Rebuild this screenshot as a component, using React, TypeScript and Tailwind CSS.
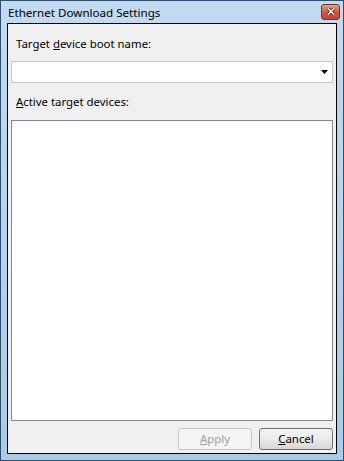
import React from 'react';

const font = { fontFamily: '"Noto Sans", "Open Sans", sans-serif' };

export default function App() {
  return (
    <div
      className="w-[344px] h-[461px] border border-[#2f4f6e] bg-gradient-to-b from-[#c2dbf0] to-[#a8cbe7] flex flex-col px-[6px] pb-[6px] text-[11.4px] text-black"
      style={font}
    >
      {/* title bar */}
      <div className="h-[22px] flex items-center justify-between pl-[1px] shrink-0">
        <span className="leading-none text-[11.6px] pt-[1px]">Ethernet Download Settings</span>
        <div className="w-[19px] h-[16px] mb-[1px] mr-[-3px] rounded-[3px] border border-[#6b3a2e] bg-gradient-to-b from-[#e9a08f] via-[#d5543a] to-[#c8452c] flex items-center justify-center">
          <svg width="8" height="7" viewBox="0 0 8 7">
            <path d="M1 0.5 L7 6.5 M7 0.5 L1 6.5" stroke="#3a1a12" strokeWidth="3" />
            <path d="M1 0.5 L7 6.5 M7 0.5 L1 6.5" stroke="#ffffff" strokeWidth="1.6" />
          </svg>
        </div>
      </div>

      {/* client area */}
      <div className="flex-1 border border-black bg-[#f0f0f0] flex flex-col px-[3px] pt-[12px] pb-[2px]">
        <div className="h-[16px] pl-[5px] leading-[16px]">
          Target <span className="underline">d</span>evice boot name:
        </div>
        <div className="mt-[9px] h-[22px] border border-[#c8c8c8] bg-white flex items-center justify-end pr-[4px]">
          <svg width="7" height="4" viewBox="0 0 7 4">
            <path d="M0 0 H7 L3.5 4 Z" fill="#000" />
          </svg>
        </div>
        <div className="mt-[11px] h-[16px] pl-[5px] leading-[16px]">
          <span className="underline">A</span>ctive target devices:
        </div>
        <div className="mt-[10px] h-[301px] border border-[#828790] bg-white" />
        <div className="mt-[7px] flex justify-end gap-[7px]">
          <button
            type="button"
            disabled
            className="w-[74px] h-[22px] rounded-[3px] border border-[#c7c7c7] bg-[#f4f4f4] text-[#a0a0a0] leading-none"
            style={font}
          >
            <span className="underline">A</span>pply
          </button>
          <button
            type="button"
            className="w-[74px] h-[22px] rounded-[3px] border border-[#707070] bg-gradient-to-b from-[#f2f2f2] via-[#ebebeb] to-[#d6d6d6] leading-none"
            style={font}
          >
            <span className="underline">C</span>ancel
          </button>
        </div>
      </div>
    </div>
  );
}
